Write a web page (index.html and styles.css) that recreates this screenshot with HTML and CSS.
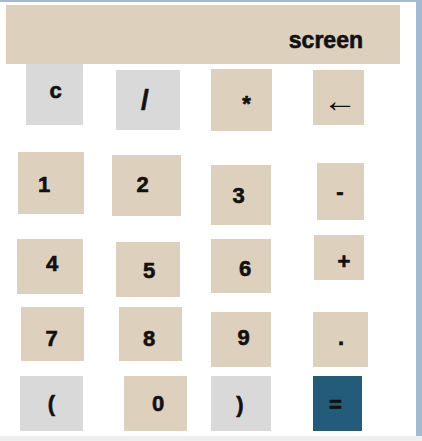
FILE: index.html
```html
<!DOCTYPE html>
<html lang="en">
<head>
<meta charset="utf-8">
<title>Calculator</title>
<link rel="stylesheet" href="styles.css">
</head>
<body>
<div class="stage">
  <main class="calc">
    <div class="screen">screen</div>
    <div class="keypad">
      <button class="key gray k-c">c</button>
      <button class="key gray k-div">/</button>
      <button class="key k-mul">*</button>
      <button class="key k-back">←</button>

      <button class="key k-1">1</button>
      <button class="key k-2">2</button>
      <button class="key k-3">3</button>
      <button class="key k-minus">-</button>

      <button class="key k-4">4</button>
      <button class="key k-5">5</button>
      <button class="key k-6">6</button>
      <button class="key k-plus">+</button>

      <button class="key k-7">7</button>
      <button class="key k-8">8</button>
      <button class="key k-9">9</button>
      <button class="key k-dot">.</button>

      <button class="key gray k-lp">(</button>
      <button class="key k-0">0</button>
      <button class="key gray k-rp">)</button>
      <button class="key blue k-eq">=</button>
    </div>
  </main>
</div>
<div class="bottom-strip"></div>
</body>
</html>
```
FILE: styles.css
```css
* { box-sizing: border-box; }

html, body {
  margin: 0;
  padding: 0;
}

body {
  background: #a3bbd1;
  font-family: "Liberation Sans", Arial, sans-serif;
  width: 422px;
  height: 441px;
  overflow: hidden;
}

.stage {
  padding-top: 2px;
  height: 436px;
}

.calc {
  width: 416px;
  height: 434px;
  background: #ffffff;
  padding: 3px 16px 0 6px;
}

.screen {
  width: 394px;
  height: 59px;
  background: #ddd0bc;
  display: flex;
  align-items: center;
  justify-content: flex-end;
  padding: 11px 37px 0 0;
  font-size: 23px;
  font-weight: 700;
  color: #111;
  -webkit-text-stroke: 0.6px #111;
}

.keypad {
  margin-left: 11px;
  display: grid;
  grid-template-columns: 95px 99px 102px 1fr;
  grid-template-rows: 88px 83px 71px 70px 60px;
  align-items: start;
  justify-items: start;
}

.key {
  border: 0;
  margin: 0;
  padding: 0;
  background: #ddd0bc;
  color: #111;
  font-family: "Liberation Sans", Arial, sans-serif;
  font-size: 22px;
  font-weight: 700;
  line-height: normal;
  -webkit-text-stroke: 0.6px #111;
  display: flex;
  align-items: center;
  justify-content: center;
}

.key.gray { background: #d9d9d9; }
.key.blue { background: #235c7b; }

/* row 1 */
.k-c    { width: 57px; height: 61px; margin-left: 9px; padding: 0 0 8px 2px; }
.k-div  { width: 64px; height: 60px; margin: 6px 0 0 4px; padding-right: 6px; font-size: 28px; }
.k-mul  { width: 61px; height: 62px; margin-top: 5px; padding: 8px 0 0 10px; }
.k-back { width: 51px; height: 55px; margin-top: 6px; padding: 6px 0 0 3px; font-size: 34px; font-weight: 400; -webkit-text-stroke: 0; }

/* row 2 */
.k-1     { width: 66px; height: 62px; margin-left: 1px; padding: 3px 14px 0 0; }
.k-2     { width: 69px; height: 61px; margin-top: 3px; padding: 0 8px 1px 0; }
.k-3     { width: 60px; height: 60px; margin-top: 13px; padding: 2px 5px 0 0; }
.k-minus { width: 47px; height: 57px; margin: 11px 0 0 4px; padding-right: 1px; }

/* row 3 */
.k-4    { width: 66px; height: 55px; margin-top: 4px; padding: 0 0 5px 4px; }
.k-5    { width: 64px; height: 55px; margin: 7px 0 0 4px; padding: 2px 0 0 2px; }
.k-6    { width: 60px; height: 54px; margin-top: 4px; padding: 6px 0 0 8px; }
.k-plus { width: 50px; height: 45px; margin-left: 1px; padding: 8px 0 0 10px; }

/* row 4 */
.k-7   { width: 63px; height: 54px; margin: 1px 0 0 4px; padding: 9px 2px 0 0; }
.k-8   { width: 63px; height: 54px; margin: 1px 0 0 7px; padding: 9px 3px 0 0; }
.k-9   { width: 60px; height: 55px; margin-top: 6px; padding: 0 0 3px 5px; }
.k-dot { width: 55px; height: 55px; margin-top: 6px; padding: 0 0 4px 1px; }

/* row 5 */
.k-lp { width: 63px; height: 55px; margin-left: 3px; padding-top: 1px; }
.k-0  { width: 63px; height: 55px; margin-left: 12px; padding: 1px 0 0 5px; }
.k-rp { width: 60px; height: 55px; padding: 2px 2px 0 0; }
.k-eq { width: 49px; height: 55px; padding: 3px 4px 0 0; }

.bottom-strip {
  height: 5px;
  background: #efefef;
}
```
